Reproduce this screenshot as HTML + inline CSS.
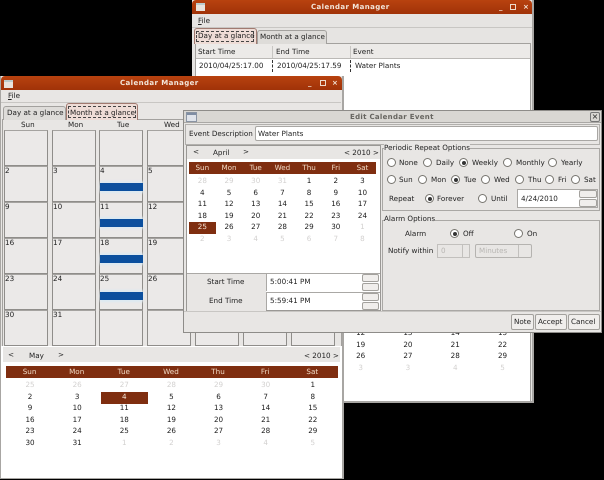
<!DOCTYPE html>
<html><head><meta charset="utf-8"><style>
html,body{margin:0;padding:0;background:#000}
body{width:604px;height:480px;overflow:hidden;position:relative;font-family:"DejaVu Sans","Liberation Sans",sans-serif;font-size:7.2px;color:#222;line-height:10px;text-rendering:geometricPrecision}
#w{position:absolute;left:0;top:0;width:604px;height:480px;overflow:hidden;filter:blur(.35px)}
div,span{box-sizing:border-box}
.a{position:absolute}
.t{position:absolute;white-space:nowrap}
.win{position:absolute;background:#e8e6e4;overflow:hidden}
.tb{position:absolute;left:0;right:0;top:0;height:14px;background:linear-gradient(#b8420f,#a03208);border-radius:4px 4px 0 0}
.tt{color:#f3e6da;font-weight:bold;letter-spacing:.4px;font-size:7px}
.cell{position:absolute;background:#ebe9e8;border:1px solid #8f8d8a;border-top-color:#a5a3a0;width:44px;height:36px}
.bar{position:absolute;height:8px;background:#0b4f9e;box-shadow:0 -2px 2px #dce9f2,0 2px 2px #dce9f2}
.hdr{position:absolute;background:#7f2e10;color:#f0d9c4;display:grid;align-items:center;text-align:center}
.g{position:absolute;display:grid;text-align:center;color:#1c1c1c}
.g i{font-style:normal;color:#d3d1d0}
.r{position:absolute;width:9px;height:9px;border-radius:50%;background:#fff;border:1px solid #77756f}
.r.s::after{content:"";position:absolute;left:1.5px;top:1.5px;width:4px;height:4px;border-radius:50%;background:#333}
.btn{position:absolute;background:#f0eeec;border:1px solid #a3a19d;border-radius:2px}
.ico{position:absolute;width:9px;height:8px;background:#e9e3dc;border-top:2px solid #bcc;}
</style></head><body><div id="w">

<!-- Back window -->
<div class="win" style="left:192px;top:0;width:342px;height:403px;background:#e6e4e2;border-right:2px solid #a8a6a3;border-bottom:2px solid #a8a6a3">
  <div class="tb"></div>
  <div class="ico" style="left:4px;top:3px"></div>
  <div class="t tt" style="left:119px;top:2px">Calendar Manager</div>
  <div class="t tt" style="left:307px;top:2px">_</div>
  <div class="a" style="left:318px;top:4px;width:6px;height:6px;border:1px solid #eedccb"></div>
  <div class="t tt" style="left:331px;top:2px">×</div>
  <div class="t" style="left:6px;top:16px"><u>F</u>ile</div>
  <div class="a" style="left:0;top:27px;width:340px;height:1px;background:#c8c6c3"></div>
  <div class="a" style="left:3px;top:43px;width:336px;height:360px;background:#fff;border:1px solid #a3a19e"></div>
  <div class="a" style="left:4px;top:44px;width:334px;height:15px;background:#eceae8;border-bottom:1px solid #bbb9b6"></div>
  <div class="a" style="left:2px;top:28px;width:63px;height:16px;background:#eedcd6;border:1px solid #a07a70;border-bottom:0;border-radius:3px 3px 0 0"></div>
  <div class="a" style="left:4px;top:31px;width:58px;height:11px;border:1px dashed #444"></div>
  <div class="t" style="left:6px;top:31px">Day at a glance</div>
  <div class="a" style="left:65px;top:30px;width:70px;height:14px;background:#dedcd9;border:1px solid #a3a19e;border-bottom:0;border-radius:3px 3px 0 0"></div>
  <div class="t" style="left:68px;top:32px">Month at a glance</div>
  <div class="t" style="left:6px;top:47px">Start Time</div>
  <div class="t" style="left:84px;top:47px">End Time</div>
  <div class="t" style="left:161px;top:47px">Event</div>
  <div class="a" style="left:80px;top:46px;width:1px;height:12px;background:#c8c6c3"></div>
  <div class="a" style="left:158px;top:46px;width:1px;height:12px;background:#c8c6c3"></div>
  <div class="t" style="left:7px;top:61px">2010/04/25:17.00</div>
  <div class="t" style="left:85px;top:61px">2010/04/25:17.59</div>
  <div class="t" style="left:163px;top:61px">Water Plants</div>
  <div class="a" style="left:80px;top:60px;height:12px;border-left:1px dashed #333"></div>
  <div class="a" style="left:158px;top:60px;height:12px;border-left:1px dashed #333"></div>
  <div class="g" style="left:145px;top:328px;grid-template-columns:repeat(4,47.3px);grid-auto-rows:11.6px">
    <span>12</span><span>13</span><span>14</span><span>15</span>
    <span>19</span><span>20</span><span>21</span><span>22</span>
    <span>26</span><span>27</span><span>28</span><span>29</span>
    <i>3</i><i>3</i><i>4</i><i>5</i>
  </div>
</div>

<!-- Left window -->
<div class="win" style="left:0;top:76px;width:344px;height:403px;border-right:2px solid #a8a6a3;border-bottom:2px solid #a8a6a3;border-left:1px solid #a8a6a3">
  <div class="tb"></div>
  <div class="ico" style="left:3px;top:4px"></div>
  <div class="t tt" style="left:119px;top:2px">Calendar Manager</div>
  <div class="t tt" style="left:307px;top:2px">_</div>
  <div class="a" style="left:319px;top:4px;width:6px;height:6px;border:1px solid #eedccb"></div>
  <div class="t tt" style="left:331px;top:2px">×</div>
  <div class="t" style="left:7px;top:15px"><u>F</u>ile</div>
  <div class="a" style="left:0;top:26px;width:340px;height:1px;background:#c8c6c3"></div>
  <div class="a" style="left:1px;top:43px;width:340px;height:230px;border:1px solid #a3a19e"></div>
  <div class="a" style="left:2px;top:30px;width:63px;height:14px;background:#dedcd9;border:1px solid #a3a19e;border-bottom:0;border-radius:3px 3px 0 0"></div>
  <div class="t" style="left:6px;top:32px">Day at a glance</div>
  <div class="a" style="left:65px;top:27px;width:72px;height:17px;background:#eedcd6;border:1px solid #a07a70;border-bottom:0;border-radius:3px 3px 0 0"></div>
  <div class="a" style="left:67px;top:30px;width:68px;height:12px;border:1px dashed #444"></div>
  <div class="t" style="left:69px;top:32px">Month at a glance</div>
</div>

<div class="t" style="left:21px;top:120px">Sun</div>
<div class="t" style="left:68px;top:120px">Mon</div>
<div class="t" style="left:117px;top:120px">Tue</div>
<div class="t" style="left:164px;top:120px">Wed</div>

<!-- Month grid rows -->
<div class="cell" style="left:4px;top:130px"></div><div class="cell" style="left:52px;top:130px"></div><div class="cell" style="left:99px;top:130px"></div><div class="cell" style="left:147px;top:130px"></div>
<div class="cell" style="left:4px;top:166px"></div><div class="cell" style="left:52px;top:166px"></div><div class="cell" style="left:99px;top:166px"></div><div class="cell" style="left:147px;top:166px"></div>
<div class="cell" style="left:4px;top:202px"></div><div class="cell" style="left:52px;top:202px"></div><div class="cell" style="left:99px;top:202px"></div><div class="cell" style="left:147px;top:202px"></div>
<div class="cell" style="left:4px;top:238px"></div><div class="cell" style="left:52px;top:238px"></div><div class="cell" style="left:99px;top:238px"></div><div class="cell" style="left:147px;top:238px"></div>
<div class="cell" style="left:4px;top:274px"></div><div class="cell" style="left:52px;top:274px"></div><div class="cell" style="left:99px;top:274px"></div><div class="cell" style="left:147px;top:274px"></div>
<div class="cell" style="left:4px;top:310px"></div><div class="cell" style="left:52px;top:310px"></div><div class="cell" style="left:99px;top:310px"></div><div class="cell" style="left:147px;top:310px"></div>
<div class="cell" style="left:195px;top:310px"></div><div class="cell" style="left:243px;top:310px"></div><div class="cell" style="left:291px;top:310px"></div>

<div class="t" style="left:5px;top:166px">2</div><div class="t" style="left:53px;top:166px">3</div><div class="t" style="left:100px;top:166px">4</div><div class="t" style="left:148px;top:166px">5</div>
<div class="t" style="left:5px;top:202px">9</div><div class="t" style="left:53px;top:202px">10</div><div class="t" style="left:100px;top:202px">11</div><div class="t" style="left:148px;top:202px">12</div>
<div class="t" style="left:5px;top:238px">16</div><div class="t" style="left:53px;top:238px">17</div><div class="t" style="left:100px;top:238px">18</div><div class="t" style="left:148px;top:238px">19</div>
<div class="t" style="left:5px;top:274px">23</div><div class="t" style="left:53px;top:274px">24</div><div class="t" style="left:100px;top:274px">25</div><div class="t" style="left:148px;top:274px">26</div>
<div class="t" style="left:5px;top:310px">30</div><div class="t" style="left:53px;top:310px">31</div>

<div class="bar" style="left:100px;top:183px;width:43px"></div>
<div class="bar" style="left:100px;top:219px;width:43px"></div>
<div class="bar" style="left:100px;top:255px;width:43px"></div>
<div class="bar" style="left:100px;top:292px;width:43px"></div>

<!-- Lower calendar -->
<div class="a" style="left:1px;top:346px;width:341px;height:132px;background:#fff"></div>
<div class="a" style="left:3px;top:347px;width:337px;height:15px;background:#e8e6e4"></div>
<div class="t" style="left:8px;top:350px">&lt;</div>
<div class="t" style="left:29px;top:351px">May</div>
<div class="t" style="left:58px;top:350px">&gt;</div>
<div class="t" style="left:304px;top:351px">&lt; 2010 &gt;</div>
<div class="hdr" style="left:6px;top:366px;width:332px;height:12px;grid-template-columns:repeat(7,47.14px)">
  <span>Sun</span><span>Mon</span><span>Tue</span><span>Wed</span><span>Thu</span><span>Fri</span><span>Sat</span>
</div>
<div class="a" style="left:101px;top:392px;width:47px;height:12px;background:#7f2e10"></div>
<div class="g" style="left:6.5px;top:380px;grid-template-columns:repeat(7,47.14px);grid-auto-rows:11.6px">
  <i>25</i><i>26</i><i>27</i><i>28</i><i>29</i><i>30</i><span>1</span>
  <span>2</span><span>3</span><span style="color:#f5e6d8">4</span><span>5</span><span>6</span><span>7</span><span>8</span>
  <span>9</span><span>10</span><span>11</span><span>12</span><span>13</span><span>14</span><span>15</span>
  <span>16</span><span>17</span><span>18</span><span>19</span><span>20</span><span>21</span><span>22</span>
  <span>23</span><span>24</span><span>25</span><span>26</span><span>27</span><span>28</span><span>29</span>
  <span>30</span><span>31</span><i>1</i><i>2</i><i>3</i><i>4</i><i>5</i>
</div>

<!-- Dialog -->
<div class="win" style="left:183px;top:110px;width:419px;height:223px;border:1px solid #8e8c89;background:#e8e6e4">
  <div class="a" style="left:0;top:0;right:0;height:12px;background:#d9d7d3;border-bottom:1px solid #aaa8a5"></div>
  <div class="ico" style="left:3px;top:2px;background:#dfe3ea;border-top-color:#7f8da3;outline:1px solid #8a94a3"></div>
  <div class="t" style="left:166px;top:1px;color:#66645f;font-weight:bold;font-size:7px;letter-spacing:.3px">Edit Calendar Event</div>
  <div class="a" style="left:406px;top:1px;width:10px;height:10px;border:1px solid #777;border-radius:2px;text-align:center;line-height:8px;font-size:8px">×</div>
  <div class="a" style="left:1px;top:13px;width:415px;height:21px;border:1px solid #b2b0ad"></div>
  <div class="t" style="left:5px;top:18px">Event Description</div>
  <div class="a" style="left:71px;top:15px;width:343px;height:15px;background:#fff;border:1px solid #a9a7a4;border-radius:2px"></div>
  <div class="t" style="left:74px;top:18px">Water Plants</div>

  <!-- Left panel -->
  <div class="a" style="left:2px;top:34px;width:195px;height:166px;background:#fff;border:1px solid #9a9895"></div>
  <div class="a" style="left:3px;top:35px;width:193px;height:13px;background:#e8e6e4"></div>
  <div class="t" style="left:9px;top:36px">&lt;</div>
  <div class="t" style="left:29px;top:37px">April</div>
  <div class="t" style="left:59px;top:36px">&gt;</div>
  <div class="t" style="left:160px;top:37px">&lt; 2010 &gt;</div>
  <div class="hdr" style="left:5px;top:51px;width:187px;height:12px;grid-template-columns:repeat(7,26.7px)">
    <span>Sun</span><span>Mon</span><span>Tue</span><span>Wed</span><span>Thu</span><span>Fri</span><span>Sat</span>
  </div>
  <div class="a" style="left:5px;top:111px;width:27px;height:12px;background:#7f2e10"></div>
  <div class="g" style="left:5px;top:65px;grid-template-columns:repeat(7,26.7px);grid-auto-rows:11.6px">
    <i>28</i><i>29</i><i>30</i><i>31</i><span>1</span><span>2</span><span>3</span>
    <span>4</span><span>5</span><span>6</span><span>7</span><span>8</span><span>9</span><span>10</span>
    <span>11</span><span>12</span><span>13</span><span>14</span><span>15</span><span>16</span><span>17</span>
    <span>18</span><span>19</span><span>20</span><span>21</span><span>22</span><span>23</span><span>24</span>
    <span style="color:#f5e6d8">25</span><span>26</span><span>27</span><span>28</span><span>29</span><span>30</span><i>1</i>
    <i>2</i><i>3</i><i>4</i><i>5</i><i>6</i><i>7</i><i>8</i>
  </div>
  <div class="a" style="left:3px;top:162px;width:79px;height:38px;background:#e8e6e4;border-top:1px solid #aaa8a5"></div>
  <div class="t" style="left:23px;top:166px">Start Time</div>
  <div class="t" style="left:25px;top:185px">End Time</div>
  <div class="a" style="left:82px;top:162px;width:114px;height:18px;background:#fff;border-top:1px solid #aaa8a5;border-left:1px solid #aaa8a5"></div>
  <div class="a" style="left:82px;top:181px;width:114px;height:18px;background:#fff;border-top:1px solid #aaa8a5;border-left:1px solid #aaa8a5"></div>
  <div class="t" style="left:86px;top:166px">5:00:41 PM</div>
  <div class="t" style="left:86px;top:185px">5:59:41 PM</div>
  <div class="btn" style="left:178px;top:163px;width:17px;height:8px"></div>
  <div class="btn" style="left:178px;top:172px;width:17px;height:8px"></div>
  <div class="btn" style="left:178px;top:182px;width:17px;height:8px"></div>
  <div class="btn" style="left:178px;top:191px;width:17px;height:8px"></div>

  <!-- Periodic -->
  <div class="a" style="left:198px;top:37px;width:218px;height:63px;border:1px solid #aaa8a5"></div>
  <div class="t" style="left:200px;top:32px;background:#e8e6e4">Periodic Repeat Options</div>
  <div class="r" style="left:203px;top:47px"></div><div class="t" style="left:215px;top:47px">None</div>
  <div class="r" style="left:239px;top:47px"></div><div class="t" style="left:252px;top:47px">Daily</div>
  <div class="r s" style="left:275px;top:47px"></div><div class="t" style="left:288px;top:47px">Weekly</div>
  <div class="r" style="left:319px;top:47px"></div><div class="t" style="left:332px;top:47px">Monthly</div>
  <div class="r" style="left:364px;top:47px"></div><div class="t" style="left:377px;top:47px">Yearly</div>
  <div class="r" style="left:203px;top:64px"></div><div class="t" style="left:215px;top:64px">Sun</div>
  <div class="r" style="left:234px;top:64px"></div><div class="t" style="left:247px;top:64px">Mon</div>
  <div class="r s" style="left:267px;top:64px"></div><div class="t" style="left:280px;top:64px">Tue</div>
  <div class="r" style="left:297px;top:64px"></div><div class="t" style="left:310px;top:64px">Wed</div>
  <div class="r" style="left:331px;top:64px"></div><div class="t" style="left:344px;top:64px">Thu</div>
  <div class="r" style="left:361px;top:64px"></div><div class="t" style="left:374px;top:64px">Fri</div>
  <div class="r" style="left:387px;top:64px"></div><div class="t" style="left:400px;top:64px">Sat</div>
  <div class="t" style="left:205px;top:83px">Repeat</div>
  <div class="r s" style="left:241px;top:83px"></div><div class="t" style="left:253px;top:83px">Forever</div>
  <div class="r" style="left:294px;top:83px"></div><div class="t" style="left:307px;top:83px">Until</div>
  <div class="a" style="left:333px;top:78px;width:81px;height:19px;background:#fff;border:1px solid #aaa8a5"></div>
  <div class="t" style="left:337px;top:83px">4/24/2010</div>
  <div class="btn" style="left:395px;top:79px;width:18px;height:8px"></div>
  <div class="btn" style="left:395px;top:88px;width:18px;height:8px"></div>

  <!-- Alarm -->
  <div class="a" style="left:198px;top:109px;width:218px;height:91px;border:1px solid #aaa8a5"></div>
  <div class="t" style="left:200px;top:103px;background:#e8e6e4">Alarm Options</div>
  <div class="t" style="left:221px;top:118px">Alarm</div>
  <div class="r s" style="left:266px;top:118px"></div><div class="t" style="left:279px;top:118px">Off</div>
  <div class="r" style="left:330px;top:118px"></div><div class="t" style="left:343px;top:118px">On</div>
  <div class="t" style="left:204px;top:135px">Notify within</div>
  <div class="a" style="left:253px;top:133px;width:33px;height:14px;background:#e8e6e4;border:1px solid #c2c0bd"></div>
  <div class="a" style="left:278px;top:134px;width:1px;height:12px;background:#c2c0bd"></div>
  <div class="t" style="left:257px;top:135px;color:#b8b6b3">0</div>
  <div class="a" style="left:291px;top:133px;width:57px;height:14px;background:#e8e6e4;border:1px solid #b5b3b0;border-radius:2px"></div>
  <div class="a" style="left:334px;top:134px;width:1px;height:12px;background:#c2c0bd"></div>
  <div class="t" style="left:295px;top:135px;color:#b8b6b3">Minutes</div>

  <!-- Footer -->
  <div class="a" style="left:0;top:200px;right:0;height:1px;background:#c8c6c3"></div>
  <div class="btn" style="left:327px;top:203px;width:23px;height:16px"></div><div class="t" style="left:330px;top:206px">Note</div>
  <div class="btn" style="left:351px;top:203px;width:32px;height:16px"></div><div class="t" style="left:354px;top:206px">Accept</div>
  <div class="btn" style="left:384px;top:203px;width:32px;height:16px"></div><div class="t" style="left:387px;top:206px">Cancel</div>
</div>
</div></body></html>
